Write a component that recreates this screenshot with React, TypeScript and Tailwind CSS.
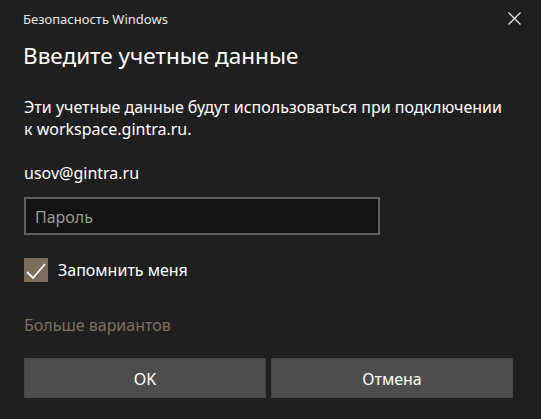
export default function App() {
  return (
    <div className="relative h-[419px] w-[541px] overflow-hidden bg-[#1f1f1f] text-white font-['Noto_Sans',sans-serif]">
      {/* Header */}
      <div className="flex items-start justify-between pl-[23px] pr-[20px] pt-[11px]">
        <span className="text-[13px] leading-[16px] text-[#e6e6e6]">Безопасность Windows</span>
        <button className="mt-[1px] flex h-[13px] w-[13px] items-center justify-center">
          <svg width="13" height="13" viewBox="0 0 13 13" fill="none">
            <path d="M0.5 0.5L12.5 12.5M12.5 0.5L0.5 12.5" stroke="#e6e6e6" strokeWidth="1.3" />
          </svg>
        </button>
      </div>

      <div className="pl-[24px] pr-[28px]">
        <h1 className="mt-[13px] -ml-px text-[22.5px] leading-[32px]">Введите учетные данные</h1>

        <p className="mt-[24px] text-[16px] leading-[22px]">
          Эти учетные данные будут использоваться при подключении
          <br />к workspace.gintra.ru.
        </p>

        <p className="mt-[22px] text-[16px] leading-[22px]">usov@gintra.ru</p>

        {/* Password */}
        <div className="mt-[13px] flex h-[38px] w-[356px] items-center border-2 border-[#5f5f5f] bg-[#131313] pl-[9px] pt-[2px]">
          <span className="text-[16px] leading-[22px] text-[#9a9a9a]">Пароль</span>
        </div>

        {/* Remember */}
        <label className="mt-[22px] flex items-center gap-[10px]">
          <span className="flex h-[24px] w-[24px] items-center justify-center bg-[#7a6e5b]">
            <svg width="24" height="24" viewBox="0 0 24 24" fill="none">
              <path d="M3 14L9 20L21 6" stroke="#ffffff" strokeWidth="1.8" />
            </svg>
          </span>
          <span className="pt-[1px] text-[16px] leading-[24px]">Запомнить меня</span>
        </label>

        <p className="mt-[32px] text-[16px] leading-[22px] text-[#7d7161]">Больше вариантов</p>

        {/* Buttons */}
        <div className="mt-[22px] flex w-[489px] gap-[5px]">
          <button className="flex h-[40px] flex-1 items-center justify-center border border-[#444] bg-[#4d4d4d] pt-[2px] text-[16px] leading-[22px]">
            OK
          </button>
          <button className="flex h-[40px] flex-1 items-center justify-center border border-[#444] bg-[#4d4d4d] pt-[2px] text-[16px] leading-[22px]">
            Отмена
          </button>
        </div>
      </div>
    </div>
  );
}
